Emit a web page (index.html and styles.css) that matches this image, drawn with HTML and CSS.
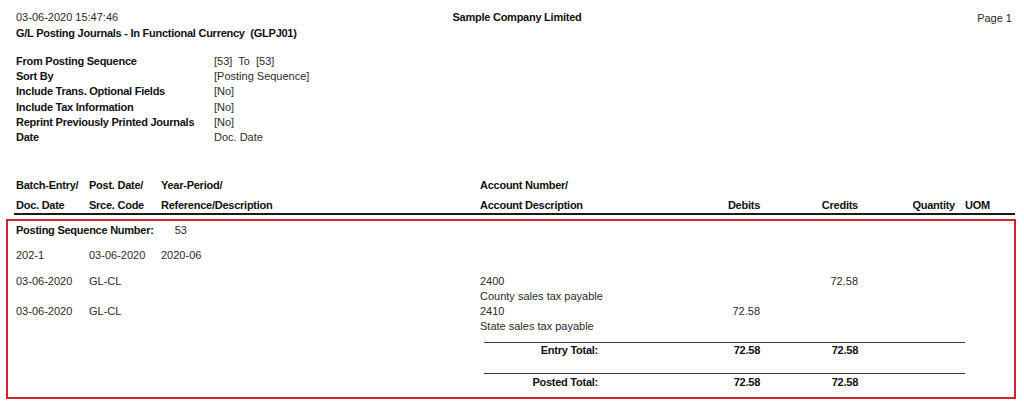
FILE: index.html
```html
<!DOCTYPE html>
<html>
<head>
<meta charset="utf-8">
<link rel="stylesheet" href="styles.css">
</head>
<body>
<div class="page">
  <header class="top">
    <div class="top-left">
      <div class="stamp">03-06-2020 15:47:46</div>
      <div class="title b">G/L Posting Journals - In Functional Currency&nbsp; (GLPJ01)</div>
    </div>
    <div class="company b">Sample Company Limited</div>
    <div class="pageno">Page 1</div>
  </header>

  <section class="params">
    <div class="b">From Posting Sequence</div><div>[53]&nbsp; To&nbsp; [53]</div>
    <div class="b">Sort By</div><div>[Posting Sequence]</div>
    <div class="b">Include Trans. Optional Fields</div><div>[No]</div>
    <div class="b">Include Tax Information</div><div>[No]</div>
    <div class="b">Reprint Previously Printed Journals</div><div>[No]</div>
    <div class="b">Date</div><div>Doc. Date</div>
  </section>

  <section class="colhead">
    <div class="grid row1 b">
      <div>Batch-Entry/</div><div>Post. Date/</div><div>Year-Period/</div><div>Account Number/</div>
    </div>
    <div class="grid row2 b">
      <div>Doc. Date</div><div>Srce. Code</div><div>Reference/Description</div><div>Account Description</div>
      <div class="r">Debits</div><div class="r">Credits</div><div class="r">Quantity</div><div class="uom">UOM</div>
    </div>
  </section>

  <section class="box">
    <div class="seq"><span class="b">Posting Sequence Number:</span><span class="seqno">53</span></div>
    <div class="grid batch">
      <div>202-1</div><div>03-06-2020</div><div>2020-06</div>
    </div>
    <div class="details">
      <div class="grid line">
        <div>03-06-2020</div><div>GL-CL</div><div></div><div>2400</div>
        <div class="r"></div><div class="r">72.58</div>
      </div>
      <div class="grid line">
        <div></div><div></div><div></div><div>County sales tax payable</div>
      </div>
      <div class="grid line">
        <div>03-06-2020</div><div>GL-CL</div><div></div><div>2410</div>
        <div class="r">72.58</div><div class="r"></div>
      </div>
      <div class="grid line">
        <div></div><div></div><div></div><div>State sales tax payable</div>
      </div>
    </div>
    <div class="total entry b">
      <div class="r">Entry Total:</div><div class="r">72.58</div><div class="r">72.58</div>
    </div>
    <div class="total posted b">
      <div class="r">Posted Total:</div><div class="r">72.58</div><div class="r">72.58</div>
    </div>
  </section>
</div>
</body>
</html>
```

FILE: styles.css
```css
* { box-sizing: border-box; }
html, body { margin: 0; padding: 0; background: #fff; }
body {
  font-family: "Liberation Sans", Arial, sans-serif;
  font-size: 11px;
  line-height: 15px;
  color: #2b2b2b;
}
.b { font-weight: bold; color: #111; letter-spacing: -0.25px; }
.r { text-align: right; }

.page { width: 1024px; height: 407px; overflow: hidden; padding-top: 10px; }

.top { display: grid; grid-template-columns: 1fr auto 1fr; padding: 0 12px 0 16px; }
.company { text-align: center; padding-left: 6px; }
.pageno { text-align: right; padding-top: 1px; }
.title { margin-top: 1px; }

.params {
  display: grid;
  grid-template-columns: 198px auto;
  padding-left: 16px;
  margin-top: 13px;
  line-height: 15.2px;
}

.grid {
  display: grid;
  grid-template-columns: 73px 72px 319px 200px 80px 98px 97px 1fr;
}
.uom { padding-left: 10px; }

.colhead { margin: 33px 9px 0 14px; padding-left: 2px; border-bottom: 2px solid #1a1a1a; }
.colhead .row1 { margin-bottom: 5px; }
.colhead .row2 { padding-top: 0; }

.box {
  margin: 4px 8px 0 6px;
  height: 180px;
  border: 2px solid #d4262e;
  padding: 2px 0 0 8px;
}
.seqno { margin-left: 21px; }
.batch { margin-top: 10px; }
.details { margin-top: 11px; }
.total {
  display: grid;
  grid-template-columns: 114px 162px 98px;
  margin-left: 468px;
  width: 481px;
  border-top: 1.5px solid #3a3a3a;
  line-height: 14px;
}
.entry { margin-top: 8px; }
.posted { margin-top: 16px; padding-top: 1px; }
```
